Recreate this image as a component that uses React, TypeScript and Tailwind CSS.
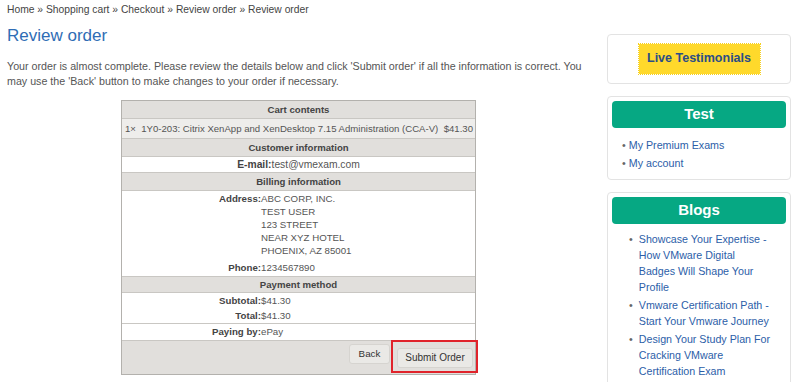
import React from "react";

const crumbs = ["Home", "Shopping cart", "Checkout", "Review order", "Review order"];

const blogs = [
  "Showcase Your Expertise - How VMware Digital Badges Will Shape Your Profile",
  "Vmware Certification Path - Start Your Vmware Journey",
  "Design Your Study Plan For Cracking VMware Certification Exam",
];

function Head({ children, lh = "leading-[17px]" }: { children: React.ReactNode; lh?: string }) {
  return (
    <div className={`border-b border-[#c9c7c3] bg-[#e1dfdc] text-center text-[9.6px] font-bold text-[#444] ${lh}`}>
      {children}
    </div>
  );
}

function Pair({ label, lh, children }: { label: string; lh: string; children: React.ReactNode }) {
  return (
    <div className={`grid grid-cols-[139px_1fr] text-[9.7px] ${lh}`}>
      <span className="text-right font-bold text-[#444]">{label}</span>
      <span>{children}</span>
    </div>
  );
}

export default function App() {
  return (
    <div className="flex h-[382px] w-[800px] overflow-hidden bg-white font-['Liberation_Sans',Arial,sans-serif] text-[#555]">
      {/* Main column */}
      <div className="w-[600px] shrink-0 pl-[7px] pt-[3px]">
        <div className="text-[10.3px] leading-[14px] text-[#444]">
          {crumbs.map((c, i) => (
            <span key={i}>
              {i > 0 && " » "}
              {c}
            </span>
          ))}
        </div>
        <h1 className="mt-[9px] text-[17px] leading-[20px] text-[#2f6db5]">Review order</h1>
        <p className="mt-[13px] w-[585px] text-[10.7px] leading-[15px] text-[#555]">
          Your order is almost complete. Please review the details below and click 'Submit order' if all the information is correct. You may use the 'Back' button to make changes to your order if necessary.
        </p>

        <div className="ml-[114px] mt-[11px] w-[355px] border border-[#b3b1ad] text-[#555]">
          <Head>Cart contents</Head>
          <div className="flex justify-between whitespace-nowrap border-b border-[#c9c7c3] bg-[#eeedeb] pl-[3px] pr-[2px] text-[9.6px] leading-[19px]">
            <span>1× &nbsp;1Y0-203: Citrix XenApp and XenDesktop 7.15 Administration (CCA-V)</span>
            <span>$41.30</span>
          </div>
          <Head>Customer information</Head>
          <div className="border-b border-[#c9c7c3] text-center text-[10.3px] leading-[15px]">
            <span className="font-bold text-[#444]">E-mail:</span>test@vmexam.com
          </div>
          <Head>Billing information</Head>
          <div className="border-b border-[#c9c7c3] pb-[2px] pt-[1px]">
            <Pair label="Address:" lh="leading-[13px]">
              ABC CORP, INC.<br />TEST USER<br />123 STREET<br />NEAR XYZ HOTEL<br />PHOENIX, AZ 85001
            </Pair>
            <div className="mt-[4px]">
              <Pair label="Phone:" lh="leading-[13px]">1234567890</Pair>
            </div>
          </div>
          <Head lh="leading-[15px]">Payment method</Head>
          <div className="border-b border-[#c9c7c3]">
            <Pair label="Subtotal:" lh="leading-[15px]">$41.30</Pair>
            <Pair label="Total:" lh="leading-[15px]">$41.30</Pair>
          </div>
          <div className="border-b border-[#c9c7c3]">
            <Pair label="Paying by:" lh="leading-[16px]">ePay</Pair>
          </div>
          <div className="flex justify-end gap-[7px] bg-[#e1dfdc] pb-[6px] pr-[2px] pt-[3px]">
            <button className="h-[20px] w-[41px] rounded-[3px] border border-[#d6d4d0] bg-[#eae9e6] text-[9.8px] text-[#333]">
              Back
            </button>
            <div className="relative">
              <button className="h-[20px] w-[76px] rounded-[3px] border border-[#d6d4d0] bg-[#eae9e6] text-[10px] text-[#333]">
                Submit Order
              </button>
              <div className="pointer-events-none absolute -bottom-[5px] -left-[6px] -right-[5px] -top-[4px] border-2 border-[#e0232b]" />
            </div>
          </div>
        </div>
      </div>

      {/* Sidebar */}
      <div className="ml-[7px] flex w-[184px] shrink-0 flex-col gap-[12px] pt-[34px]">
        <div className="flex h-[50px] shrink-0 items-center justify-center rounded-[4px] border border-[#e3e3e3]">
          <div className="mb-[1px] flex h-[30px] w-[121px] items-center justify-center bg-[#ffd92b] text-[12.5px] font-bold text-[#2b4d86] outline-1 outline-dotted outline-[#f5d020]">
            Live Testimonials
          </div>
        </div>

        <div className="shrink-0 rounded-[4px] border border-[#e3e3e3] px-[4px] pb-[8px] pt-[4px]">
          <div className="flex h-[27px] items-center justify-center rounded-[4px] bg-[#06a883] text-[15px] font-bold text-white">
            Test
          </div>
          <ul className="mt-[9px] space-y-[2px] pl-[10px] text-[10.7px] leading-[16px] text-[#2c5ea8]">
            <li className="flex items-center gap-[3px]"><span className="text-[#666]">•</span>My Premium Exams</li>
            <li className="flex items-center gap-[3px]"><span className="text-[#666]">•</span>My account</li>
          </ul>
        </div>

        <div className="shrink-0 rounded-[4px] border border-[#e3e3e3] px-[4px] pb-[8px] pt-[4px]">
          <div className="flex h-[27px] items-center justify-center rounded-[4px] bg-[#06a883] text-[15px] font-bold text-white">
            Blogs
          </div>
          <ul className="mt-[7px] space-y-[2px] pl-[17px] pr-[12px] text-[10.7px] leading-[16px] text-[#2c5ea8]">
            {blogs.map((b) => (
              <li key={b} className="flex gap-[6px]">
                <span className="text-[#666]">•</span>
                <span>{b}</span>
              </li>
            ))}
          </ul>
        </div>
      </div>
    </div>
  );
}
